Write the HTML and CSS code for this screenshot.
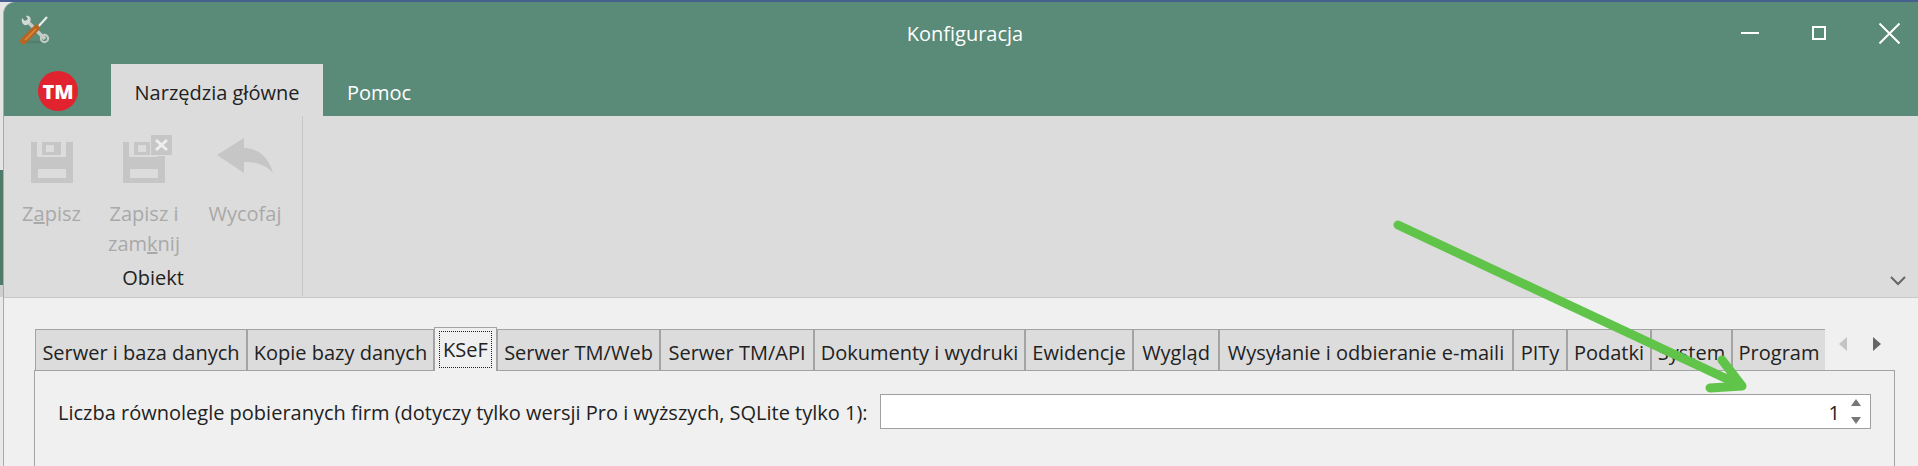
FILE: index.html
```html
<!DOCTYPE html>
<html lang="pl">
<head>
    <meta charset="UTF-8">
    <meta name="viewport" content="width=device-width, initial-scale=1.0">
    <title>Konfiguracja</title>
    <link rel="stylesheet" href="styles.css">
</head>
<body>
    <div id="topline"></div>
    <div id="desktop">
        <!-- sliver of the window behind -->
        <div id="behind">
            <div class="bh bh-light"></div>
            <div class="bh bh-green"></div>
            <div class="bh bh-grey"></div>
            <div class="bh bh-pale"></div>
        </div>
        <div id="window">
            <div id="titlebar">
                <div class="app-icon">
                    <svg width="30" height="30" viewBox="0 0 30 30">
                        <path d="M6 27 L28 27" stroke="#3f6b5a" stroke-width="2.5" opacity="0.3"/>
                        <path d="M7 6 L25 24" stroke="#c3cbc6" stroke-width="3.5"/>
                        <path d="M2 3 L5 6 L8 4 L6 1 C9 0 12 3 10 7 L7 10 C3 11 1 7 2 3 Z" fill="#d4dad6"/>
                        <circle cx="24.5" cy="23.5" r="3.6" fill="none" stroke="#c3cbc6" stroke-width="2.2"/>
                        <path d="M17 13 L27 2" stroke="#e8ecea" stroke-width="2.2"/>
                        <path d="M3.5 26 L16.5 13" stroke="#b8651f" stroke-width="6.5" stroke-linecap="round"/>
                        <path d="M5 25 L16 14" stroke="#de8c45" stroke-width="1.5"/>
                    </svg>
                </div>
                <div class="win-title">Konfiguracja</div>
                <div class="win-btns">
                    <svg width="18" height="14" viewBox="0 0 18 14"><path d="M0 7 H18" stroke="#fff" stroke-width="2"/></svg>
                    <svg width="14" height="14" viewBox="0 0 14 14"><rect x="1" y="1" width="12" height="12" fill="none" stroke="#fff" stroke-width="2"/></svg>
                    <svg width="21" height="21" viewBox="0 0 21 21"><path d="M0.5 0.5 L20.5 20.5 M20.5 0.5 L0.5 20.5" stroke="#fff" stroke-width="2"/></svg>
                </div>
            </div>
            <div id="menutabs">
                <span class="logo">TM</span>
                <span class="menutab on">Narzędzia główne</span>
                <span class="menutab">Pomoc</span>
            </div>
            <div id="ribbon">
                <div class="rgroup">
                    <div class="rbtns">
                        <div class="rbtn rbtn-save">
                            <svg width="42" height="48" viewBox="0 0 42 48">
                                <path fill-rule="evenodd" fill="#c6c6c6" d="M0 7 H6 V22 H35 V7 H42 V48 H0 Z M7 34 V43 H35 V34 Z M11 7 H30 V20 H11 Z M15 10 V17 H23 V10 Z"/>
                            </svg>
                            <span>Z<u>a</u>pisz</span>
                        </div>
                        <div class="rbtn rbtn-close">
                            <svg width="50" height="48" viewBox="0 0 50 48">
                                <path fill-rule="evenodd" fill="#c6c6c6" d="M0 7 H6 V22 H35 V7 H42 V48 H0 Z M7 34 V43 H35 V34 Z M11 7 H27 V20 H11 Z M15 10 V17 H23 V10 Z"/>
                                <rect x="27" y="-1" width="23" height="22" fill="#dcdcdc"/>
                                <rect x="28" y="0" width="21" height="20" rx="1" fill="#c6c6c6"/>
                                <path d="M33 5 L44 15 M44 5 L33 15" stroke="#eee" stroke-width="3"/>
                            </svg>
                            <span>Zapisz i<br>zam<u>k</u>nij</span>
                        </div>
                        <div class="rbtn">
                            <svg width="56" height="48" viewBox="0 0 56 48">
                                <path fill="#c6c6c6" d="M0 20 L27 3 V13 C42 13 52 23 56 38 C48 29 38 27 27 27 V38 Z"/>
                            </svg>
                            <span>Wycofaj</span>
                        </div>
                    </div>
                    <div class="rgroup-name">Obiekt</div>
                </div>
                <svg class="collapse" width="16" height="10" viewBox="0 0 16 10"><path d="M1 1 L8 8 L15 1" fill="none" stroke="#666" stroke-width="2"/></svg>
            </div>
            <div id="content">
                <div class="tabs-head">
                    <div class="tabs">
                        <div class="tab">Serwer i baza danych</div>
                        <div class="tab">Kopie bazy danych</div>
                        <div class="tab active"><span>KSeF</span></div>
                        <div class="tab">Serwer TM/Web</div>
                        <div class="tab">Serwer TM/API</div>
                        <div class="tab">Dokumenty i wydruki</div>
                        <div class="tab">Ewidencje</div>
                        <div class="tab">Wygląd</div>
                        <div class="tab">Wysyłanie i odbieranie e-maili</div>
                        <div class="tab">PITy</div>
                        <div class="tab">Podatki</div>
                        <div class="tab">System</div>
                        <div class="tab last">Program</div>
                    </div>
                    <div class="scroller">
                        <svg width="8" height="14" viewBox="0 0 8 14"><path d="M8 0 V14 L0 7 Z" fill="#c4c4c4"/></svg>
                        <svg width="8" height="14" viewBox="0 0 8 14"><path d="M0 0 V14 L8 7 Z" fill="#666"/></svg>
                    </div>
                </div>
                <div class="panel">
                    <div class="field">
                        <label>Liczba równolegle pobieranych firm (dotyczy tylko wersji Pro i wyższych, SQLite tylko 1):</label>
                        <div class="spin">
                            <span class="spin-val">1</span>
                            <div class="spin-arrows">
                                <svg width="10" height="7" viewBox="0 0 10 7"><path d="M5 0 L10 7 H0 Z" fill="#777"/></svg>
                                <svg width="10" height="7" viewBox="0 0 10 7"><path d="M0 0 H10 L5 7 Z" fill="#777"/></svg>
                            </div>
                        </div>
                    </div>
                </div>
            </div>
        </div>
    </div>
    <!-- annotation drawn on top of the screenshot -->
    <svg id="arrow" width="1918" height="466" viewBox="0 0 1918 466">
        <path d="M1398 225 L1742 386 M1722 360 L1742 386 L1710 388" fill="none" stroke="#61c44a" stroke-width="9" stroke-linecap="round" stroke-linejoin="round"/>
    </svg>
</body>
</html>
```

FILE: styles.css
```css
* {
    box-sizing: border-box;
}

body {
    margin: 0;
    height: 466px;
    overflow: hidden;
    position: relative;
    font-family: "Open Sans", "Noto Sans", sans-serif;
    font-size: 20px;
    color: #222;
    background: #e6e6e6;
    display: flex;
    flex-direction: column;
}

#topline {
    height: 2px;
    background: #45608f;
}

#desktop {
    flex: 1;
    display: flex;
    min-height: 0;
}

#behind {
    width: 3px;
    display: flex;
    flex-direction: column;
}
.bh-light {
    height: 168px;
    background: #e4e4e4;
}
.bh-green {
    height: 115px;
    background: #4f7a68;
}
.bh-grey {
    height: 12px;
    background: #cfcfcf;
}
.bh-pale {
    flex: 1;
    background: #e9e9e9;
}

#window {
    flex: 1;
    display: flex;
    flex-direction: column;
    border-left: 1px solid #aaa;
    border-top-left-radius: 12px;
    overflow: hidden;
    background: #5a8a78;
}

/* title bar */
#titlebar {
    height: 62px;
    padding: 0 18px 0 8px;
    display: grid;
    grid-template-columns: 1fr auto 1fr;
    align-items: center;
    color: #fff;
}
.app-icon {
    margin-left: 8px;
    margin-bottom: 6px;
    height: 30px;
}
.win-title {
    padding-left: 18px;
}
.win-btns {
    display: flex;
    justify-content: flex-end;
    align-items: center;
    gap: 53px;
}

#menutabs {
    height: 52px;
    display: flex;
    align-items: stretch;
}
.logo {
    width: 40px;
    height: 40px;
    margin: 7px 33px 0 34px;
    border-radius: 50%;
    background: #e0232f;
    color: #fff;
    font-weight: 800;
    font-size: 20px;
    display: flex;
    justify-content: center;
    align-items: center;
}
.menutab {
    width: 212px;
    padding-top: 6px;
    text-align: center;
    line-height: 46px;
    color: #fff;
}
.menutab.on {
    background: #dcdcdc;
    color: #222;
}
.menutab:last-child {
    width: auto;
    padding-left: 24px;
}

/* ribbon */
#ribbon {
    height: 182px;
    flex-shrink: 0;
    background: #dcdcdc;
    border-bottom: 1px solid #c8c8c8;
    display: flex;
    justify-content: space-between;
}
.rgroup {
    width: 299px;
    padding: 19px 0 0 10px;
    border-right: 1px solid #c8c8c8;
    margin-bottom: 1px;
}
.rbtns {
    display: flex;
    gap: 15px;
    height: 128px;
}
.rbtn {
    width: 80px;
    display: flex;
    flex-direction: column;
    align-items: center;
    color: #a9a9a9;
    line-height: 30px;
    text-align: center;
    white-space: nowrap;
}
.rbtn-save {
    width: 75px;
}
.rbtn:last-child {
    width: 92px;
}
.rbtn svg {
    margin-bottom: 16px;
    flex-shrink: 0;
    overflow: visible;
}
.rbtn-close svg {
    margin-left: 8px;
}
.rgroup-name {
    text-align: center;
    line-height: 30px;
    padding-right: 10px;
}
.collapse {
    align-self: flex-end;
    margin: 0 12px 11px 0;
}

/* tabbed page */
#content {
    flex: 1;
    background: #f0f0f0;
    padding: 31px 23px 0 30px;
    display: flex;
    flex-direction: column;
    min-height: 0;
}
.tabs-head {
    display: flex;
    height: 41px;
    padding-left: 1px;
}
.tabs {
    display: grid;
    grid-template-columns: 212px 187px 63px 163px 154px 211px 108px 86px 294px 54px 84px 81px 93px;
    height: 41px;
}
.tab {
    background: #dcdcdc;
    border: 1px solid #a3a3a3;
    border-bottom: 0;
    padding-top: 4px;
    display: flex;
    justify-content: center;
    align-items: center;
    white-space: nowrap;
}
.tab.last {
    border-right: 0;
}
.tab.active {
    background: #f0f0f0;
    margin-top: -2px;
    margin-bottom: -1px;
    padding: 2px 4px;
    position: relative;
    z-index: 1;
}
.tab.active span {
    flex: 1;
    height: 37px;
    line-height: 36px;
    text-align: center;
    border: 1px dotted #222;
}
.scroller {
    display: flex;
    gap: 26px;
    padding: 8px 0 0 14px;
    align-items: flex-start;
}

.panel {
    flex: 1;
    border: 1px solid #a3a3a3;
    border-bottom: 0;
    padding: 23px 23px 0 23px;
}
.field {
    display: flex;
    align-items: center;
    justify-content: space-between;
}
.field label {
    padding-top: 1px;
    white-space: nowrap;
}
.spin {
    width: 991px;
    height: 35px;
    background: #fff;
    border: 1px solid #a0a0a0;
    display: flex;
    justify-content: flex-end;
    align-items: center;
    padding-right: 9px;
    gap: 11px;
}
.spin-val {
    padding-top: 2px;
}
.spin-arrows {
    display: flex;
    flex-direction: column;
    gap: 11px;
}
.spin-arrows svg {
    display: block;
}

#arrow {
    position: absolute;
    left: 0;
    top: 0;
    pointer-events: none;
}
```
